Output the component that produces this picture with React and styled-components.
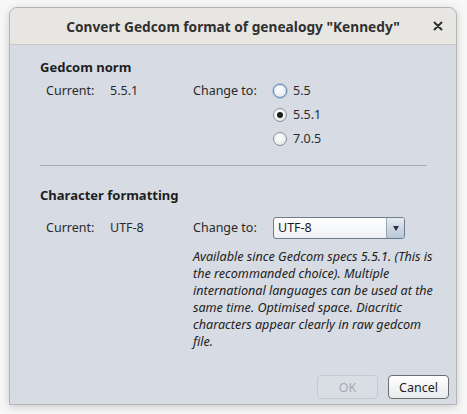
import React, { useState } from "react";
import styled, { createGlobalStyle } from "styled-components";

const GlobalStyle = createGlobalStyle`
  html, body {
    margin: 0;
    padding: 0;
    background: #f7f7f7;
  }
  body {
    font-family: "Noto Sans", "Open Sans", sans-serif;
    color: #2e3436;
  }
`;

const Page = styled.div`
  width: 467px;
  height: 414px;
  box-sizing: border-box;
  padding: 7px 10px 11px 9px;
`;

const Window = styled.div`
  height: 100%;
  display: flex;
  flex-direction: column;
  border: 1px solid #b3b3b3;
  border-radius: 8px 8px 0 0;
  overflow: hidden;
  background: #d7dbe3;
  box-shadow: 0 2px 8px rgba(0, 0, 0, 0.18);
`;

const TitleBar = styled.div`
  height: 36px;
  flex-shrink: 0;
  display: grid;
  grid-template-columns: 40px 1fr 40px;
  align-items: center;
  background: #e8e6e3;
  border-bottom: 1px solid #c9c7c4;
`;

const Title = styled.div`
  grid-column: 2;
  text-align: center;
  font-size: 13.7px;
  font-weight: 700;
  color: #303030;
`;

const CloseButton = styled.button`
  border: 0;
  background: none;
  padding: 0;
  margin-left: 10px;
  width: 24px;
  height: 24px;
  display: flex;
  align-items: center;
  justify-content: center;
`;

const Body = styled.div`
  flex: 1;
  display: flex;
  flex-direction: column;
  padding: 13px 29px 0 30px;
  font-size: 12.5px;
`;

const SectionTitle = styled.div`
  font-size: 13px;
  font-weight: 700;
  color: #1e1e1e;
  line-height: 18px;
  margin-top: ${(p) => p.$top || 0}px;
`;

const Row = styled.div`
  display: grid;
  grid-template-columns: 64px 83px 80px 1fr;
  margin-left: 6px;
  margin-top: ${(p) => p.$top}px;
  line-height: 17px;
  color: #2a2a2a;
`;

const Cell = styled.div``;

const RadioList = styled.div`
  display: flex;
  flex-direction: column;
  gap: 7px;
`;

const RadioRow = styled.label`
  display: flex;
  align-items: center;
  gap: 6px;
  height: 17px;
`;

const RadioDot = styled.span`
  width: 14px;
  height: 14px;
  border-radius: 50%;
  box-sizing: border-box;
  border: 1px solid ${(p) => (p.$focus ? "#5d84b0" : "#8c9096")};
  background: radial-gradient(circle at 40% 35%, #ffffff 0%, #eef0f2 55%, #d3d6da 100%);
  display: flex;
  align-items: center;
  justify-content: center;
  box-shadow: ${(p) => (p.$focus ? "0 0 0 1px rgba(110,150,200,0.35)" : "none")};

  &::after {
    content: "";
    width: 6px;
    height: 6px;
    border-radius: 50%;
    background: #1e1e1e;
    display: ${(p) => (p.$checked ? "block" : "none")};
  }
`;

const Separator = styled.div`
  height: 1px;
  background: #a9adb3;
  margin-top: 18px;
`;

const ComboBox = styled.div`
  width: 132px;
  height: 22px;
  box-sizing: border-box;
  display: flex;
  border: 1px solid #6f7b88;
  border-radius: 3px;
  overflow: hidden;
  background: linear-gradient(#ffffff, #eef0f3);
  margin-top: -2px;
`;

const ComboText = styled.div`
  flex: 1;
  padding-left: 4px;
  line-height: 20px;
  color: #1a1a1a;
`;

const ComboArrow = styled.div`
  width: 17px;
  border-left: 1px solid #9aa6b4;
  background: linear-gradient(#e4ebf3, #b7c6d7);
  display: flex;
  align-items: center;
  justify-content: center;

  &::after {
    content: "";
    border-left: 3.5px solid transparent;
    border-right: 3.5px solid transparent;
    border-top: 5px solid #2a3440;
  }
`;

const Description = styled.p`
  grid-column: 3 / 5;
  margin: 9px 0 0 0;
  font-style: italic;
  font-size: 12.6px;
  line-height: 17px;
  color: #222;
  width: 241px;
`;

const Footer = styled.div`
  margin-top: auto;
  display: flex;
  justify-content: flex-end;
  gap: 10px;
  padding: 0 0 5px 0;
  margin-right: -22px;
`;

const Button = styled.button`
  width: 61px;
  height: 24px;
  box-sizing: border-box;
  font-family: inherit;
  font-size: 12.5px;
  border-radius: 4px;
  border: 1px solid ${(p) => (p.disabled ? "#c5c9cf" : "#6c6c6c")};
  color: ${(p) => (p.disabled ? "#a7abb1" : "#1e1e1e")};
  background: ${(p) =>
    p.disabled ? "#d9dde4" : "linear-gradient(#ffffff, #e9eaec)"};
  padding: 0;
`;

export default function App() {
  const [norm, setNorm] = useState("5.5.1");
  const norms = ["5.5", "5.5.1", "7.0.5"];

  return (
    <>
      <GlobalStyle />
      <Page>
        <Window>
          <TitleBar>
            <Title>Convert Gedcom format of genealogy "Kennedy"</Title>
            <CloseButton aria-label="Close">
              <svg width="10" height="10" viewBox="0 0 10 10">
                <path d="M1.5 1.5 L8.5 8.5 M8.5 1.5 L1.5 8.5" stroke="#2e2e2e" strokeWidth="1.9" strokeLinecap="round" />
              </svg>
            </CloseButton>
          </TitleBar>
          <Body>
            <SectionTitle>Gedcom norm</SectionTitle>
            <Row $top={6}>
              <Cell>Current:</Cell>
              <Cell>5.5.1</Cell>
              <Cell>Change to:</Cell>
              <RadioList>
                {norms.map((n, i) => (
                  <RadioRow key={n} onClick={() => setNorm(n)}>
                    <RadioDot $checked={norm === n} $focus={i === 0} />
                    {n}
                  </RadioRow>
                ))}
              </RadioList>
            </Row>
            <Separator />
            <SectionTitle $top={20}>Character formatting</SectionTitle>
            <Row $top={15}>
              <Cell>Current:</Cell>
              <Cell>UTF-8</Cell>
              <Cell>Change to:</Cell>
              <ComboBox>
                <ComboText>UTF-8</ComboText>
                <ComboArrow />
              </ComboBox>
              <Description>
                Available since Gedcom specs 5.5.1. (This is the recommanded
                choice). Multiple international languages can be used at the
                same time. Optimised space. Diacritic characters appear clearly
                in raw gedcom file.
              </Description>
            </Row>
            <Footer>
              <Button disabled>OK</Button>
              <Button>Cancel</Button>
            </Footer>
          </Body>
        </Window>
      </Page>
    </>
  );
}
